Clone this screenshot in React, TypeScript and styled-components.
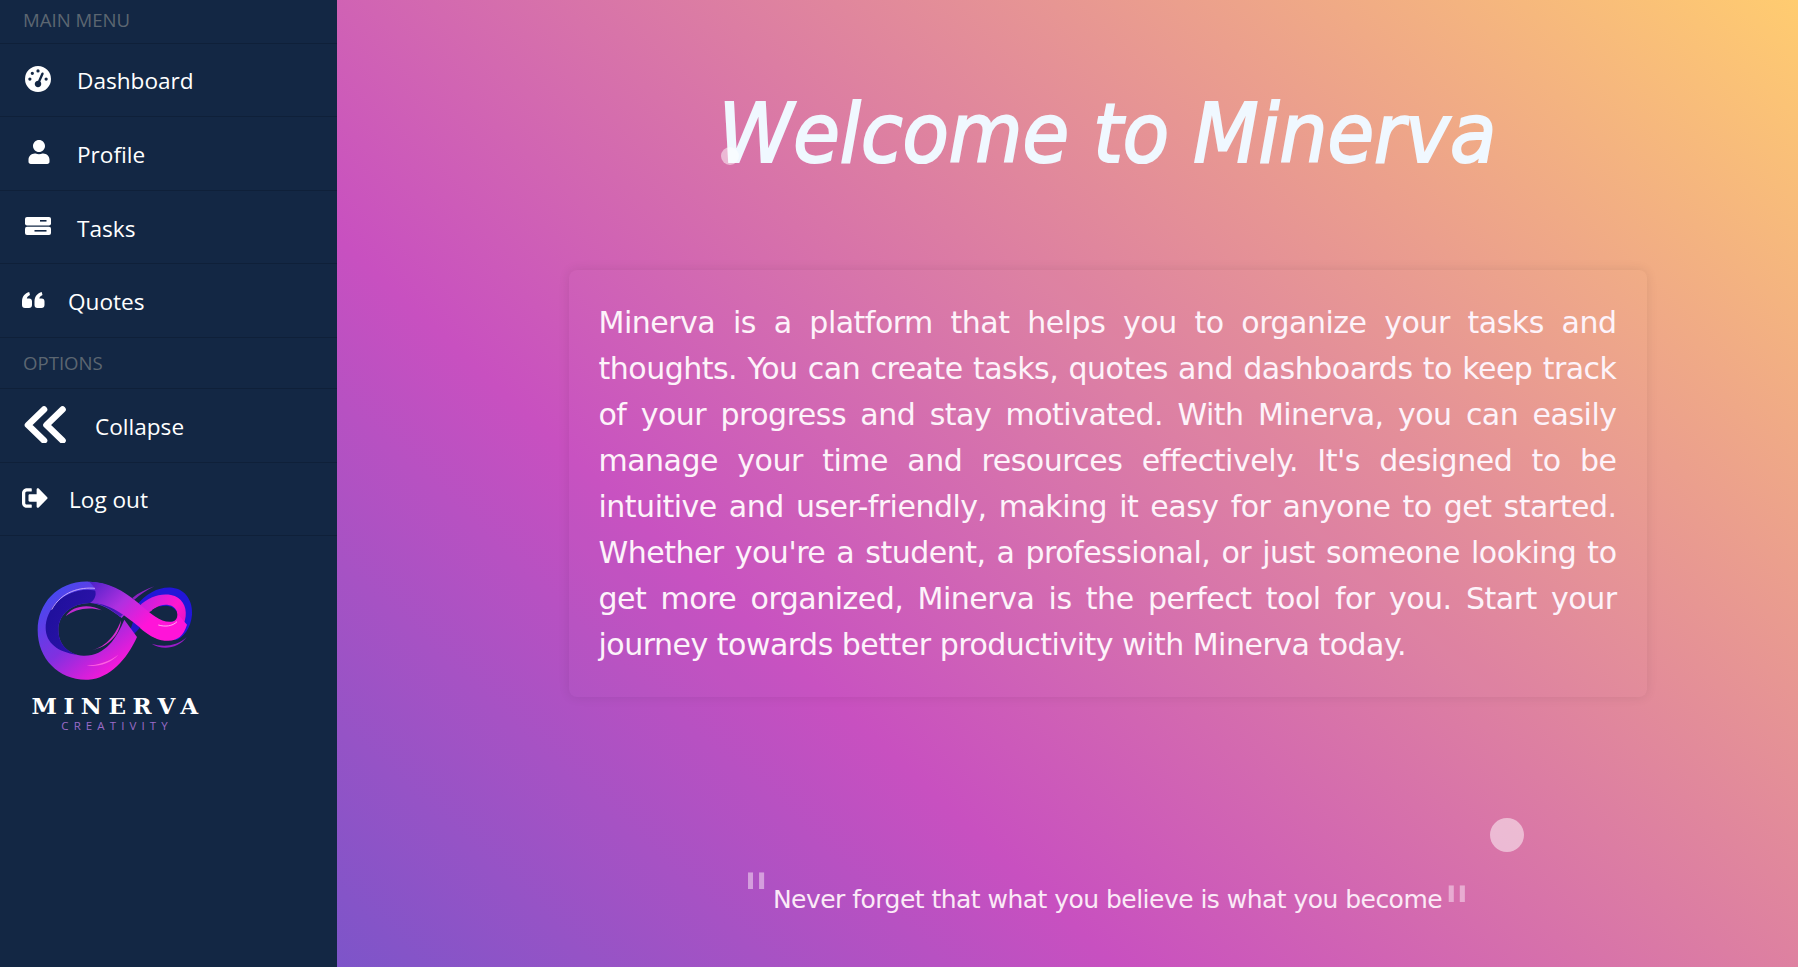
import React from 'react';
import styled, { createGlobalStyle } from 'styled-components';
import { FaUser, FaSignOutAlt } from 'react-icons/fa';
import { FaGaugeHigh } from 'react-icons/fa6';

const GlobalStyle = createGlobalStyle`
    html, body {
        margin: 0;
        padding: 0;
        height: 100%;
        overflow: hidden;
    }
    body {
        background-color: #c850c0;
        background-image: linear-gradient(43deg, #4158d0 -10%, #c850c0 39.5%, #ffcc70 100%);
        font-family: "DejaVu Sans", sans-serif;
    }
`;

const Page = styled.div`
    display: flex;
    width: 1798px;
    height: 967px;
    position: relative;
    overflow: hidden;
`;

const Sidebar = styled.nav`
    width: 337px;
    flex-shrink: 0;
    background: #132744;
    color: #ffffff;
    font-family: "Open Sans", sans-serif;
`;

const SectionLabel = styled.div<{ $height: number; $lift: number }>`
    height: ${props => props.$height}px;
    box-sizing: border-box;
    padding: 0 23px ${props => props.$lift}px;
    display: flex;
    align-items: center;
    font-size: 18.6px;
    color: #5c6671;
    border-bottom: 1px solid #0f2039;
`;

const MenuRow = styled.div<{ $gap: number; $left: number }>`
    height: 73.6px;
    box-sizing: border-box;
    padding: 2px 0 0 ${props => props.$left}px;
    display: flex;
    align-items: center;
    gap: ${props => props.$gap}px;
    font-size: 22.6px;
    color: #ffffff;
    border-bottom: 1px solid #0f2039;
    & > svg {
        flex-shrink: 0;
        position: relative;
        top: -2px;
    }
`;

const Logo = styled.div`
    margin: 42px 0 0 30px;
    width: 170px;
    display: flex;
    flex-direction: column;
    align-items: center;
`;

const LogoName = styled.div`
    font-family: "DejaVu Serif", serif;
    font-weight: 700;
    font-size: 23px;
    line-height: 22px;
    letter-spacing: 6.6px;
    margin-top: 11px;
    padding-left: 6px;
    color: #ffffff;
    white-space: nowrap;
`;

const LogoTagline = styled.div`
    font-family: "Open Sans", sans-serif;
    font-size: 11.5px;
    line-height: 12px;
    letter-spacing: 5.1px;
    margin-top: 3px;
    padding-left: 4px;
    color: #9b6bc8;
    white-space: nowrap;
`;

const Main = styled.main`
    flex: 1;
    padding-left: 80px;
    display: flex;
    flex-direction: column;
    align-items: center;
`;

const Title = styled.h1`
    margin: 78px 0 0;
    font-size: 82px;
    line-height: 112px;
    font-style: italic;
    font-weight: 400;
    -webkit-text-stroke: 2.2px #f0f8ff;
    color: #f0f8ff;
    white-space: nowrap;
    transform: scaleX(0.923);
`;

const IntroCard = styled.section`
    margin-top: 80px;
    width: 1078px;
    height: 427px;
    box-sizing: border-box;
    padding: 30px;
    border-radius: 8px;
    background: rgba(255, 255, 255, 0.015);
    box-shadow: 0 0 12px rgba(0, 0, 0, 0.09);
`;

const IntroText = styled.p`
    margin: 0;
    font-size: 30px;
    line-height: 46px;
    letter-spacing: -0.5px;
    text-align: justify;
    color: #fdf3fa;
`;

const QuoteLine = styled.div`
    margin: 186px 0 0 -2px;
    display: flex;
    align-items: flex-start;
    font-size: 25px;
    line-height: 34px;
    letter-spacing: -0.53px;
    color: #fbeaf7;
    white-space: nowrap;
`;

const QuoteMark = styled.span<{ $raised?: boolean }>`
    font-size: 60px;
    line-height: 60px;
    letter-spacing: 0;
    opacity: 0.5;
    margin: ${props => (props.$raised ? '-17px 3px 0 0' : '-4px 0 0 1px')};
    height: 34px;
`;

const Bubble = styled.div<{ $x: number; $y: number; $size: number }>`
    position: absolute;
    left: ${props => props.$x}px;
    top: ${props => props.$y}px;
    width: ${props => props.$size}px;
    height: ${props => props.$size}px;
    border-radius: 50%;
    background: rgba(255, 255, 255, 0.5);
`;

const TasksIcon = () => (
    <svg width="26" height="18" viewBox="0 0 26 18" aria-hidden="true">
        <rect x="0" y="0" width="26" height="8.4" rx="2" fill="#fff" />
        <rect x="0" y="9.8" width="26" height="8.2" rx="2" fill="#fff" />
        <rect x="15" y="3" width="6.5" height="1.6" fill="#132744" />
        <rect x="9.5" y="13" width="12" height="1.6" fill="#132744" />
    </svg>
);

const QuoteIcon = () => (
    <svg width="23" height="16" viewBox="0 0 23 16" aria-hidden="true" fill="#fff">
        <path d="M0 9.5C0 4.5 3 1.2 7.2 0L8 3C6.3 3.7 5 5 4.8 6.5H7.2C9 6.5 10 7.8 10 9.5V13C10 15 8.8 16 7 16H3C1 16 0 15 0 13Z" />
        <path d="M12.5 9.5C12.5 4.5 15.5 1.2 19.7 0L20.5 3C18.8 3.7 17.5 5 17.3 6.5H19.7C21.5 6.5 22.5 7.8 22.5 9.5V13C22.5 15 21.3 16 19.5 16H15.5C13.5 16 12.5 15 12.5 13Z" />
    </svg>
);

const CollapseIcon = () => (
    <svg width="42" height="38" viewBox="0 0 42 38" aria-hidden="true" fill="none" stroke="#fff" strokeWidth="6.6" strokeLinecap="round" strokeLinejoin="round">
        <path d="M20 4.5L4 20L20 35.5" />
        <path d="M38.5 4.5L22.5 20L38.5 35.5" />
    </svg>
);

const InfinityMark = () => (
    <svg width="160" height="106" viewBox="70 55 480 318" aria-hidden="true">
        <defs>
            <linearGradient id="loopLeft" x1="0.05" y1="0.2" x2="0.7" y2="1">
                <stop offset="0" stopColor="#4848ee" />
                <stop offset="0.5" stopColor="#8030e0" />
                <stop offset="1" stopColor="#ff17d8" />
            </linearGradient>
            <linearGradient id="innerBand" x1="0" y1="0" x2="1" y2="0.4">
                <stop offset="0" stopColor="#1c0f98" />
                <stop offset="0.6" stopColor="#2a12a8" />
                <stop offset="1" stopColor="#5a1cc0" />
            </linearGradient>
            <linearGradient id="band" x1="0" y1="0" x2="1" y2="0.6">
                <stop offset="0" stopColor="#4a22c8" />
                <stop offset="0.4" stopColor="#b030e0" />
                <stop offset="0.75" stopColor="#ff14d8" />
                <stop offset="1" stopColor="#ff14d8" />
            </linearGradient>
            <linearGradient id="loopRight" x1="0" y1="0.2" x2="1" y2="0.8">
                <stop offset="0" stopColor="#c020e0" />
                <stop offset="0.6" stopColor="#ff18cf" />
                <stop offset="1" stopColor="#e010c0" />
            </linearGradient>
        </defs>
        <path
            d="M372 140 C405 98 445 80 482 84 C522 88 544 125 541 165 C538 205 515 235 490 242 L470 180 L430 120 Z"
            fill="#2216d8"
        />
        <path
            d="M382 140 C410 112 445 100 478 106 C510 112 526 140 522 170 C518 205 495 235 460 243 C430 241 405 222 385 205 L420 150 C430 165 445 190 470 190 C490 190 500 172 495 155 C488 136 465 132 445 138 C425 145 410 160 398 170 Z"
            fill="url(#loopRight)"
        />
        <path
            d="M412 160 C425 146 445 137 465 138 C485 140 497 152 497 165 C497 178 488 186 476 187 C455 188 432 176 412 160 Z"
            fill="#132744"
        />
        <path d="M345 240 C355 215 362 190 372 165 L398 185 C385 205 370 225 345 240 Z" fill="#2214c8" />
        <path
            d="M232 66 C140 62 78 130 78 212 C78 300 145 364 230 360 C295 356 345 300 376 232 L338 180 C315 235 280 290 215 288 C170 285 140 255 140 210 C140 165 180 130 235 130 C262 130 300 150 330 175 L370 130 C330 90 285 68 232 66 Z"
            fill="url(#loopLeft)"
        />
        <path
            d="M102 205 C102 150 150 92 228 90 C280 90 322 118 352 150 L325 172 C300 148 265 128 232 130 C180 132 140 165 140 210 C140 248 160 272 195 285 C140 278 102 250 102 205 Z"
            fill="url(#innerBand)"
        />
        <path
            d="M232 66 C290 66 335 92 380 130 C420 165 450 190 480 186 C494 184 500 176 500 165 L526 195 C515 230 495 245 465 243 C425 240 395 212 365 188 C330 160 285 128 235 130 C265 110 250 80 232 66 Z"
            fill="url(#band)"
        />
        <path d="M120 150 C150 95 205 82 250 86" fill="none" stroke="#d8b8ff" strokeWidth="2.5" />
        <path d="M440 196 C460 202 482 200 496 186" fill="none" stroke="#ffc8f4" strokeWidth="2.5" />
        <path d="M162 170 C180 140 230 130 270 152 C230 140 190 148 162 170 Z" fill="#c02ad0" />
        <path d="M240 272 C285 262 315 220 328 182 C325 225 290 262 240 272 Z" fill="#d72cd0" />
        <path d="M225 318 C260 316 295 305 320 285 C295 312 260 322 225 318 Z" fill="#ff60e0" />
        <path d="M362 115 C380 100 405 88 428 80 C405 92 385 105 368 120 Z" fill="#8a22c0" />
        <path d="M420 252 C450 262 495 262 525 232 C500 268 450 272 420 252 Z" fill="#9a1cc8" />
    </svg>
);

const App = () => (
    <Page>
        <GlobalStyle />
        <Sidebar>
            <SectionLabel $height={43.6} $lift={4}>MAIN MENU</SectionLabel>
            <MenuRow $left={25} $gap={26}>
                <FaGaugeHigh size={26} />
                Dashboard
            </MenuRow>
            <MenuRow $left={27} $gap={26}>
                <FaUser size={24} />
                Profile
            </MenuRow>
            <MenuRow $left={25} $gap={26}>
                <TasksIcon />
                Tasks
            </MenuRow>
            <MenuRow $left={22} $gap={23}>
                <QuoteIcon />
                Quotes
            </MenuRow>
            <SectionLabel $height={51} $lift={0}>OPTIONS</SectionLabel>
            <MenuRow $left={24} $gap={29}>
                <CollapseIcon />
                Collapse
            </MenuRow>
            <MenuRow $left={22} $gap={21}>
                <FaSignOutAlt size={26} />
                Log out
            </MenuRow>
            <Logo>
                <InfinityMark />
                <LogoName>MINERVA</LogoName>
                <LogoTagline>CREATIVITY</LogoTagline>
            </Logo>
        </Sidebar>
        <Main>
            <Title>Welcome to Minerva</Title>
            <IntroCard>
                <IntroText>
                    Minerva is a platform that helps you to organize your tasks and thoughts. You can create
                    tasks, quotes and dashboards to keep track of your progress and stay motivated. With
                    Minerva, you can easily manage your time and resources effectively. It's designed to be
                    intuitive and user-friendly, making it easy for anyone to get started. Whether you're a
                    student, a professional, or just someone looking to get more organized, Minerva is the
                    perfect tool for you. Start your journey towards better productivity with Minerva today.
                </IntroText>
            </IntroCard>
            <QuoteLine>
                <QuoteMark $raised>"</QuoteMark>
                Never forget that what you believe is what you become
                <QuoteMark>"</QuoteMark>
            </QuoteLine>
        </Main>
        <Bubble $x={721} $y={147} $size={18} />
        <Bubble $x={1490} $y={818} $size={34} />
    </Page>
);

export default App;
